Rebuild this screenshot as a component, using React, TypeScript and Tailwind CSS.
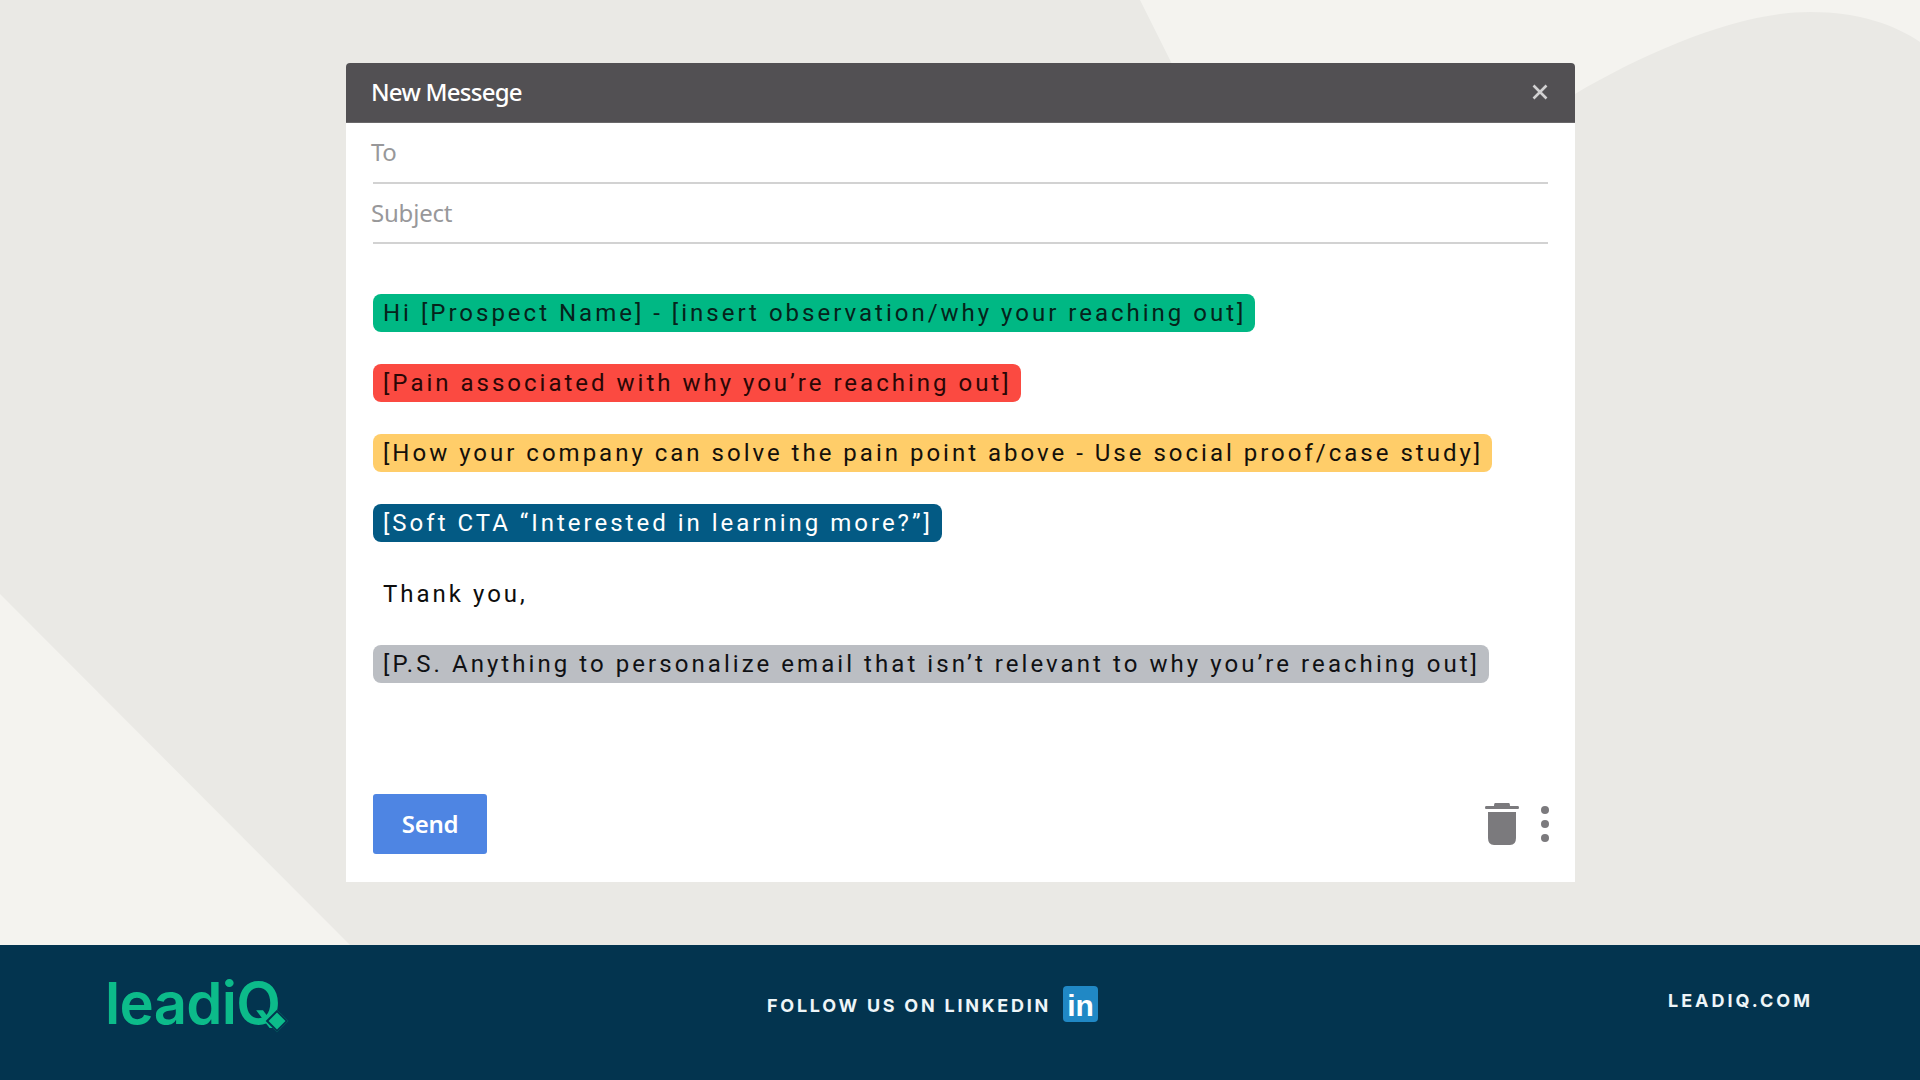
const roboto = "font-['Roboto',sans-serif]";

function Pill({ bg, text, wide, children }: { bg: string; text: string; wide?: boolean; children: React.ReactNode }) {
  return (
    <div className={`self-start h-[38px] flex items-center pl-[10px] pr-[9px] rounded-[8px] text-[24px] leading-none whitespace-nowrap ${wide ? "tracking-[3.06px]" : "tracking-[3px]"} ${roboto} ${bg} ${text}`}>
      {children}
    </div>
  );
}

function Background() {
  return (
    <svg className="absolute inset-0 w-full h-full" viewBox="0 0 1920 945" preserveAspectRatio="none" aria-hidden="true">
      <rect width="1920" height="945" fill="#eae9e5" />
      <path d="M1140 0 L1175 70 L1575 94 C1650 50 1740 12 1810 12 C1860 12 1895 25 1920 42 L1920 0 Z" fill="#f4f3ef" />
      <path d="M0 594 L350 945 L0 945 Z" fill="#f4f3ef" />
    </svg>
  );
}

export default function App() {
  return (
    <div className="w-[1920px] h-[1080px] flex flex-col overflow-hidden bg-[#eae9e5]">
      <main className="relative h-[945px] pt-[63px] pl-[346px]">
        <Background />
        <section className="relative w-[1229px] h-[819px] bg-white rounded-t-[4px] flex flex-col">
          <header className="h-[60px] shrink-0 bg-[#525053] rounded-t-[4px] flex items-center justify-between pl-[25px] pr-[26px] pb-[2px] font-['Noto_Sans',sans-serif] font-medium text-[24px] tracking-[-0.75px] text-white border-b border-[#6a686a]">
            <span>New Messege</span>
            <svg width="18" height="18" viewBox="0 0 18 18" fill="none" stroke="#d2d1d2" strokeWidth="2.6" aria-hidden="true">
              <path d="M2.5 2.5 L15.5 15.5 M15.5 2.5 L2.5 15.5" />
            </svg>
          </header>
          <div className="mx-[27px] h-[61px] shrink-0 flex items-center pb-[2px] border-b-2 border-[#d2d2d2] font-['Noto_Sans',sans-serif] text-[24px] tracking-[-0.3px] text-[#98989a]">
            <span className="-ml-[2px]">To</span>
          </div>
          <div className="mx-[27px] h-[60px] shrink-0 flex items-center border-b-2 border-[#d2d2d2] font-['Noto_Sans',sans-serif] text-[24px] tracking-[-0.2px] text-[#98989a]">
            <span className="-ml-[2px]">Subject</span>
          </div>
          <div className="flex flex-col gap-[32.15px] pl-[27px] pt-[50px]">
            <Pill bg="bg-[#00b884]" text="text-[#06231b]">Hi [Prospect Name] - [insert observation/why your reaching out]</Pill>
            <Pill bg="bg-[#fb4a41]" text="text-[#2a0706]">[Pain associated with why you’re reaching out]</Pill>
            <Pill bg="bg-[#ffcd69]" text="text-[#14100a]">[How your company can solve the pain point above - Use social proof/case study]</Pill>
            <Pill bg="bg-[#035a84]" text="text-white">[Soft CTA “Interested in learning more?”]</Pill>
            <Pill bg="bg-white" text="text-[#0d0d0d]">Thank you,</Pill>
            <Pill wide bg="bg-[#bbbec3]" text="text-[#101114]">[P.S. Anything to personalize email that isn’t relevant to why you’re reaching out]</Pill>
          </div>
          <div className="mt-auto flex items-center justify-between pl-[27px] pr-[26px] pb-[28px]">
            <button className="w-[114px] h-[60px] rounded-[3px] bg-[#4e85e3] text-white font-['Noto_Sans',sans-serif] font-semibold text-[24px] tracking-[-0.3px]">
              Send
            </button>
            <div className="flex items-center gap-[22px]">
              <svg width="34" height="42" viewBox="0 0 34 42" fill="#7b7a7d" aria-hidden="true">
                <path d="M10 0 H24 Q25 0 25 3 H33 Q34 3 34 4.5 Q34 6 33 6 H1 Q0 6 0 4.5 Q0 3 1 3 H9 Q9 0 10 0 Z" />
                <path d="M3 9 H31 V35 Q31 42 25 42 H9 Q3 42 3 35 Z" />
              </svg>
              <div className="flex flex-col gap-[6px]">
                <span className="block w-[8px] h-[8px] rounded-full bg-[#7b7a7d]" />
                <span className="block w-[8px] h-[8px] rounded-full bg-[#7b7a7d]" />
                <span className="block w-[8px] h-[8px] rounded-full bg-[#7b7a7d]" />
              </div>
            </div>
          </div>
        </section>
      </main>
      <footer className="h-[135px] bg-[#03344f] flex items-center relative">
        <div className="w-[660px] pl-[105px] pb-[20px] flex items-center">
          <span className="relative font-['Inter',sans-serif] font-semibold text-[58px] leading-none tracking-[-0.7px] text-[#0cbb8a]">
            leadiQ
            <span className="absolute right-[-5px] bottom-[3px] w-[16px] h-[16px] rotate-45 bg-[#0cbb8a] border-2 border-[#03344f]" />
          </span>
        </div>
        <div className="flex items-center gap-[12px] pl-[107px] pb-[18px]">
          <span className="mt-[4px] font-['Inter',sans-serif] font-bold text-[18px] tracking-[2.75px] text-[#eef5f8] whitespace-nowrap">FOLLOW US ON LINKEDIN</span>
          <span className="w-[35px] h-[36px] rounded-[4px] bg-[#2088c5] flex items-end justify-center pb-[1px] font-['Liberation_Sans',sans-serif] font-bold text-[30px] leading-[30px] text-white">in</span>
        </div>
        <span className="absolute left-[1668px] top-[46px] font-['Inter',sans-serif] font-bold text-[18px] leading-[20px] tracking-[3px] text-[#eef5f8] whitespace-nowrap">LEADIQ.COM</span>
      </footer>
    </div>
  );
}
